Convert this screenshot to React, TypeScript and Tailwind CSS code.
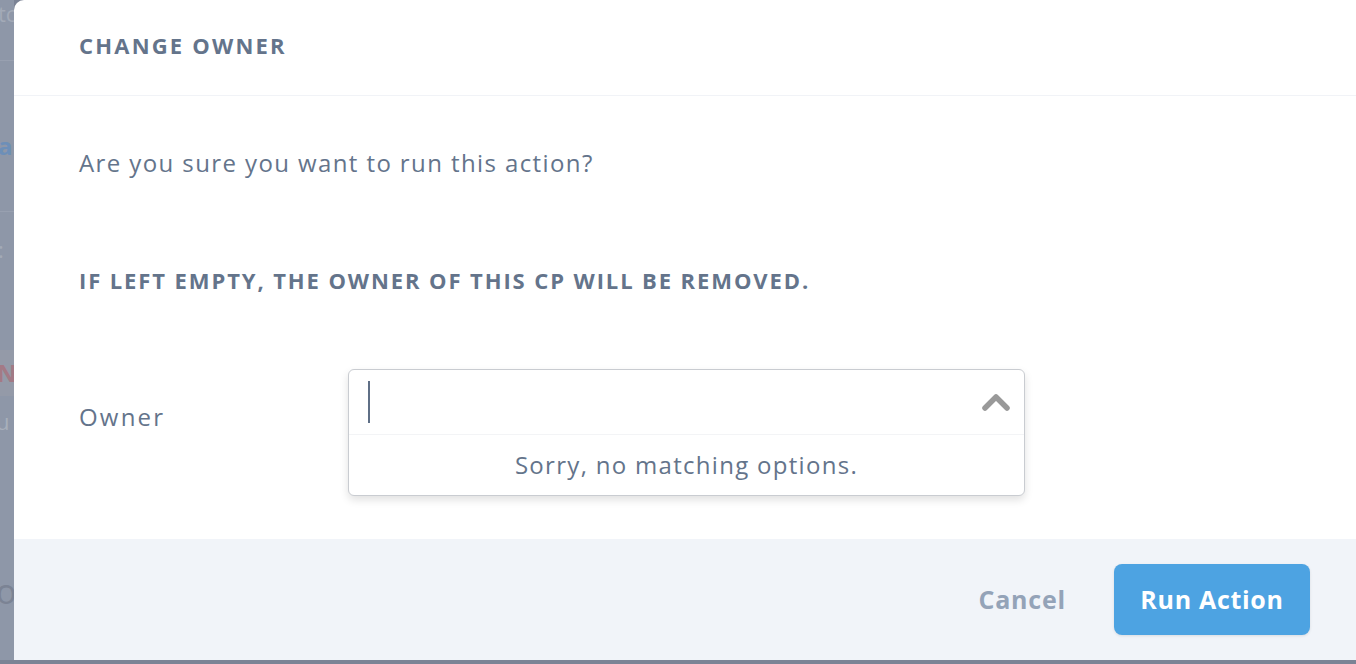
import { useState } from "react";

function Backdrop() {
  return (
    <div className="relative w-[14px] shrink-0 overflow-hidden bg-[#8e97a8]">
      <div className="flex h-full w-[60px] flex-col text-[#a9b0bd]" style={{ fontFamily: "'Open Sans', sans-serif" }}>
        <div className="h-[30px] pt-[2px] text-[22px] leading-[22px] -ml-[2px] text-[#a3aab7]">tc</div>
        <div className="mt-[30px] h-px bg-[#98a0b0]" />
        <div className="mt-[70px] -ml-[2px] text-[24px] font-bold leading-[30px] text-[#6d8fb8]">a</div>
        <div className="mt-[50px] h-px bg-[#98a0b0]" />
        <div className="mt-[22px] -ml-[2px] text-[22px] leading-[30px] text-[#a3aab7]">:</div>
        <div className="mt-[86px] h-[46px] bg-[#949aa8] pt-[8px] -ml-[3px] text-[24px] font-bold leading-[30px] text-[#a37a86]">N</div>
        <div className="mt-[10px] -ml-[4px] text-[22px] leading-[30px] text-[#a8afbb]">u</div>
        <div className="mt-[135px] -ml-[4px] text-[34px] leading-[40px] text-[#7b8394]">oi</div>
      </div>
    </div>
  );
}

function ChevronUp() {
  return (
    <svg width="32" height="22" viewBox="0 0 32 22" fill="none">
      <path d="M5 17 L16 6 L27 17" stroke="#999999" strokeWidth="5.5" strokeLinecap="round" strokeLinejoin="round" />
    </svg>
  );
}

function OwnerSelect() {
  const [query] = useState("");
  return (
    <div className="w-[677px] rounded-[6px] border border-[#c9ccd1] bg-white shadow-[0_4px_8px_rgba(0,0,0,0.12)]">
      <div className="flex h-[65px] items-center border-b border-[#f3f4f6] pl-[19px] pr-[12px]">
        <div className="h-[42px] w-[2px] bg-[#5f6f86]" />
        <span className="flex-1">{query}</span>
        <ChevronUp />
      </div>
      <div className="flex h-[60px] items-center justify-center text-[24px] tracking-[1.3px] text-[#64748b]">
        Sorry, no matching options.
      </div>
    </div>
  );
}

export default function App() {
  return (
    <div className="flex h-[664px] w-full flex-col overflow-hidden bg-[#7b8395]" style={{ fontFamily: "'Open Sans', sans-serif" }}>
      <div className="flex h-[660px] w-full">
        <Backdrop />
        <div className="flex flex-1 flex-col overflow-hidden rounded-tl-[10px] bg-white">
          <div className="flex h-[96px] shrink-0 items-center border-b border-[#f1f3f7] px-[65px]">
            <h2 className="-mt-[4px] text-[22px] font-bold tracking-[2.2px] text-[#64748b]">CHANGE OWNER</h2>
          </div>

          <div className="flex-1 px-[65px]">
            <p className="mt-[51px] text-[24px] leading-[32px] tracking-[1.4px] text-[#64748b]">
              Are you sure you want to run this action?
            </p>
            <p className="mt-[87px] text-[22px] font-bold leading-[28px] tracking-[1.9px] text-[#64748b]">
              IF LEFT EMPTY, THE OWNER OF THIS CP WILL BE REMOVED.
            </p>
            <div className="mt-[75px] flex items-start">
              <label className="w-[269px] shrink-0 pt-[32px] text-[24px] leading-[32px] tracking-[2.2px] text-[#64748b]">
                Owner
              </label>
              <OwnerSelect />
            </div>
          </div>

          <div className="flex h-[121px] shrink-0 items-center justify-end gap-[48px] bg-[#f1f4f9] px-[46px]">
            <button className="text-[25px] font-bold tracking-[0.8px] text-[#94a3b8]">Cancel</button>
            <button className="h-[71px] w-[196px] rounded-[8px] bg-[#4da3e2] text-[25px] font-bold tracking-[0.7px] text-white shadow-[0_1px_3px_rgba(0,0,0,0.1)]">
              Run Action
            </button>
          </div>
        </div>
      </div>
    </div>
  );
}
